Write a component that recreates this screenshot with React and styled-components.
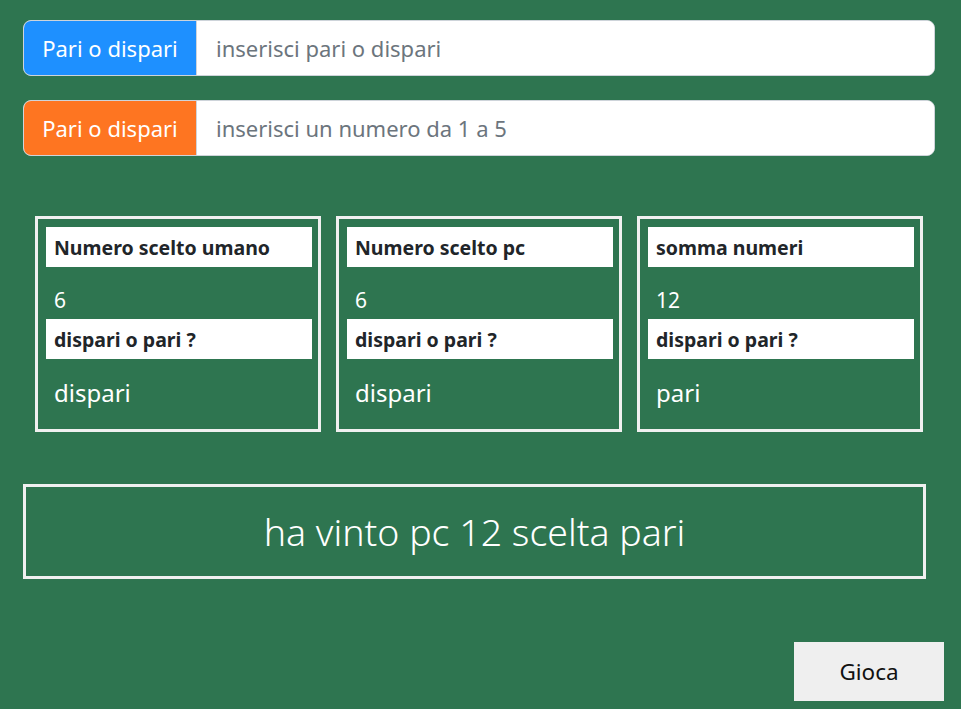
import styled, { createGlobalStyle } from 'styled-components';

const GlobalStyle = createGlobalStyle`
  html, body {
    margin: 0;
    padding: 0;
    background-color: #2e7550;
    font-family: "Segoe UI", "Noto Sans", "Open Sans", sans-serif;
  }
  * {
    box-sizing: border-box;
  }
`;

const Page = styled.div`
  width: 961px;
  height: 709px;
  padding: 20px 26px 0 23px;
  display: flex;
  flex-direction: column;
`;

const InputGroup = styled.div`
  display: flex;
  height: 56px;
  margin-bottom: 24px;
  border: 1px solid #ced4da;
  border-radius: 8px;
  overflow: hidden;
  background: #fff;
`;

const Prefix = styled.span`
  width: 173px;
  flex: none;
  display: flex;
  align-items: center;
  justify-content: center;
  color: #fff;
  font-size: 22px;
  background-color: ${(p) => p.$color};
  border-right: 1px solid #ced4da;
`;

const Field = styled.input`
  flex: 1;
  border: none;
  outline: none;
  padding: 0 19px;
  font-family: inherit;
  font-size: 22px;
  color: #495057;
  &::placeholder {
    color: #6c757d;
  }
`;

const Cards = styled.div`
  display: grid;
  grid-template-columns: repeat(3, 286px);
  gap: 15px;
  margin: 36px 0 0 12px;
`;

const Card = styled.div`
  height: 216px;
  border: 3px solid #f0f0f0;
  padding: 8px 6px 0 8px;
  display: flex;
  flex-direction: column;
`;

const Label = styled.div`
  height: 40px;
  background: #fff;
  color: #212529;
  font-weight: 700;
  font-size: 19.5px;
  padding: 0 8px;
  display: flex;
  align-items: center;
`;

const Value = styled.div`
  color: #fff;
  font-size: ${(p) => p.$size}px;
  padding: ${(p) => p.$pad};
  height: ${(p) => p.$h}px;
  display: flex;
  align-items: center;
`;

const Result = styled.div`
  margin-top: 52px;
  width: 903px;
  height: 95px;
  border: 3px solid #f0f0f0;
  display: flex;
  align-items: center;
  justify-content: center;
  color: #fff;
  font-size: 37.5px;
  font-weight: 300;
`;

const Footer = styled.div`
  display: flex;
  justify-content: flex-end;
  margin-top: 63px;
  margin-right: -9px;
`;

const Button = styled.button`
  width: 150px;
  height: 59px;
  border: none;
  background: #efefef;
  color: #111;
  font-family: inherit;
  font-size: 22.5px;
`;

const data = [
  { title: 'Numero scelto umano', num: '6', kind: 'dispari' },
  { title: 'Numero scelto pc', num: '6', kind: 'dispari' },
  { title: 'somma numeri', num: '12', kind: 'pari' },
];

export default function App() {
  return (
    <>
      <GlobalStyle />
      <Page>
        <InputGroup>
          <Prefix $color="#1e90ff">Pari o dispari</Prefix>
          <Field placeholder="inserisci pari o dispari" />
        </InputGroup>
        <InputGroup>
          <Prefix $color="#fe7521">Pari o dispari</Prefix>
          <Field placeholder="inserisci un numero da 1 a 5" />
        </InputGroup>
        <Cards>
          {data.map((d) => (
            <Card key={d.title}>
              <Label>{d.title}</Label>
              <Value $size={21} $h={52} $pad="14px 8px 0">{d.num}</Value>
              <Label>dispari o pari ?</Label>
              <Value $size={24} $h={66} $pad="0 8px">{d.kind}</Value>
            </Card>
          ))}
        </Cards>
        <Result>ha vinto pc 12 scelta pari</Result>
        <Footer>
          <Button>Gioca</Button>
        </Footer>
      </Page>
    </>
  );
}
